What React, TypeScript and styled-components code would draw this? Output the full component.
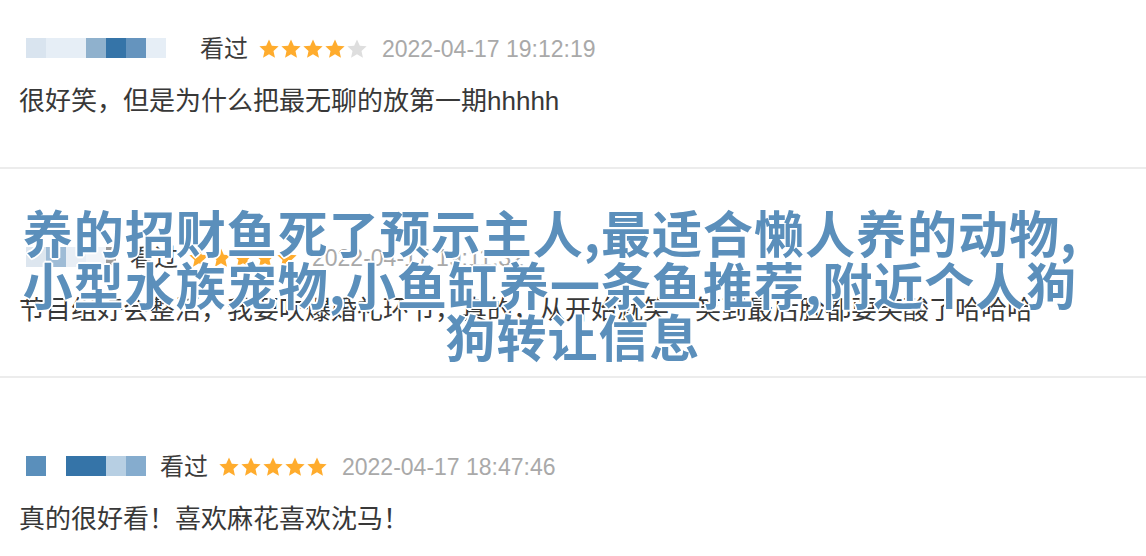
import React from "react";
import styled, { createGlobalStyle } from "styled-components";

const GlobalStyle = createGlobalStyle`
  html, body {
    margin: 0;
    padding: 0;
    background: #ffffff;
  }
  body {
    font-family: "Liberation Sans", "Noto Sans CJK SC", sans-serif;
    overflow: hidden;
  }
`;

type Review = {
  mosaic: [string, number][];
  stars: number;
  time: string;
  text: string;
};

const reviews: Review[] = [
  {
    mosaic: [
      ["#d9e4ef", 20],
      ["#e6eef6", 20],
      ["#e6eef6", 20],
      ["#8fb1cd", 20],
      ["#3574a8", 20],
      ["#6594be", 20],
      ["#e6eef6", 20],
      ["#ffffff", 20],
    ],
    stars: 4,
    time: "2022-04-17 19:12:19",
    text: "很好笑，但是为什么把最无聊的放第一期hhhhh",
  },
  {
    mosaic: [
      ["#dde6ef", 20],
      ["#9fbcd6", 20],
      ["#e8eef5", 20],
      ["#f1f4f8", 20],
      ["#9c9c9c", 10],
    ],
    stars: 5,
    time: "2022-04-17 19:11:32",
    text: "节目组好会整活，我要吹爆婚礼环节，真的，从开始就笑一笑到最后脸都要笑酸了哈哈哈",
  },
  {
    mosaic: [
      ["#5a8fbb", 20],
      ["#ffffff", 20],
      ["#3574a8", 20],
      ["#3574a8", 20],
      ["#b7cfe3", 20],
      ["#85acce", 20],
    ],
    stars: 5,
    time: "2022-04-17 18:47:46",
    text: "真的很好看！喜欢麻花喜欢沈马！",
  },
];

function Star({ on }: { on: boolean }) {
  return (
    <StarBox viewBox="0 0 24 24">
      <polygon
        points="12,1.5 15.1,8.4 22.5,9.1 16.9,14.1 18.5,21.5 12,17.7 5.5,21.5 7.1,14.1 1.5,9.1 8.9,8.4"
        fill={on ? "#ffac2d" : "#dedede"}
      />
    </StarBox>
  );
}

export default function App() {
  return (
    <Page>
      <GlobalStyle />
      <List>
        {reviews.map((r, i) => (
          <Item key={i}>
            <Header>
              <Mosaic>
                {r.mosaic.map(([c, w], j) => (
                  <Cell key={j} color={c} w={w} />
                ))}
              </Mosaic>
              <Watched>看过</Watched>
              <Stars>
                {[0, 1, 2, 3, 4].map((s) => (
                  <Star key={s} on={s < r.stars} />
                ))}
              </Stars>
              <Time>{r.time}</Time>
            </Header>
            <Comment>{r.text}</Comment>
          </Item>
        ))}
      </List>
      <Caption>
        <CaptionLine trail>养的招财鱼死了预示主人,最适合懒人养的动物,</CaptionLine>
        <CaptionLine trail>小型水族宠物,小鱼缸养一条鱼推荐,附近个人狗</CaptionLine>
        <CaptionLine>狗转让信息</CaptionLine>
      </Caption>
    </Page>
  );
}

const Page = styled.div`
  position: relative;
  width: 1146px;
  height: 556px;
  overflow: hidden;
  background: #ffffff;
`;

const List = styled.div`
  display: flex;
  flex-direction: column;
`;

const Item = styled.div`
  display: flex;
  flex-direction: column;
  gap: 20px;
  padding: 75px 19px 48px;
  border-bottom: 2px solid #ececec;

  &:first-child {
    padding-top: 35px;
  }
`;

const Header = styled.div`
  display: flex;
  align-items: center;
  height: 28px;
  padding-left: 7px;
`;

const Mosaic = styled.div`
  display: flex;
  height: 20px;
  margin-right: 14px;
  margin-top: -2px;
`;

const Cell = styled.div<{ color: string; w: number }>`
  width: ${(p) => p.w}px;
  height: 20px;
  background: ${(p) => p.color};
`;

const Watched = styled.span`
  font-size: 24px;
  line-height: 28px;
  color: #3c3c3c;
  margin-right: 10px;
`;

const Stars = styled.div`
  display: flex;
  margin-right: 14px;
`;

const StarBox = styled.svg`
  width: 22px;
  height: 22px;
  display: block;
`;

const Time = styled.span`
  font-size: 23px;
  line-height: 28px;
  color: #a9a9a9;
`;

const Comment = styled.div`
  font-size: 26px;
  line-height: 36px;
  color: #383838;
  white-space: nowrap;
`;

const Caption = styled.div`
  position: absolute;
  top: 205px;
  left: 0;
  right: 0;
  display: flex;
  flex-direction: column;
  align-items: center;
  font-family: "Noto Sans CJK SC", sans-serif;
  font-size: 50px;
  line-height: 52px;
  font-weight: 700;
  letter-spacing: 1px;
  color: #5b8fbb;
  text-shadow: 2px 0 0 #fff, -2px 0 0 #fff, 0 2px 0 #fff, 0 -2px 0 #fff,
    1px 1px 0 #fff, -1px -1px 0 #fff, 1px -1px 0 #fff, -1px 1px 0 #fff;
`;

const CaptionLine = styled.div<{ trail?: boolean }>`
  white-space: nowrap;
  padding-right: ${(p) => (p.trail ? "46px" : "0")};
`;
